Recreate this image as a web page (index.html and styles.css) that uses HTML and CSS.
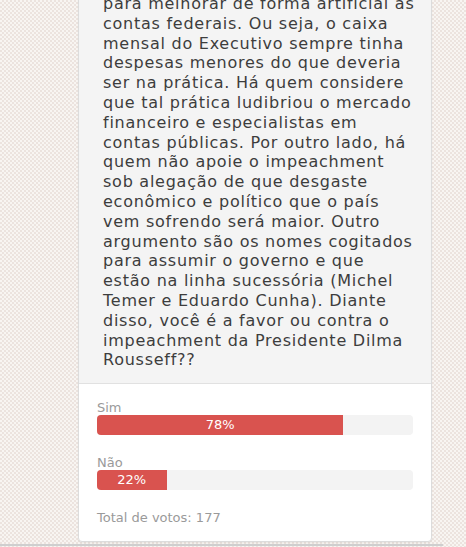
FILE: index.html
```html
<!DOCTYPE html>
<html lang="pt">
<head>
<meta charset="utf-8">
<link rel="stylesheet" href="styles.css">
</head>
<body>
<div class="page">
  <div class="poll">
    <div class="question">
      <p>para melhorar de forma artificial as contas federais. Ou seja, o caixa mensal do Executivo sempre tinha despesas menores do que deveria ser na prática. Há quem considere que tal prática ludibriou o mercado financeiro e especialistas em contas públicas. Por outro lado, há quem não apoie o impeachment sob alegação de que desgaste econômico e político que o país vem sofrendo será maior. Outro argumento são os nomes cogitados para assumir o governo e que estão na linha sucessória (Michel Temer e Eduardo Cunha). Diante disso, você é a favor ou contra o impeachment da Presidente Dilma Rousseff??</p>
    </div>
    <div class="results">
      <div class="option">
        <div class="label">Sim</div>
        <div class="bar"><div class="fill" style="width:78%">78%</div></div>
      </div>
      <div class="option">
        <div class="label">Não</div>
        <div class="bar"><div class="fill" style="width:22%">22%</div></div>
      </div>
      <div class="total">Total de votos: 177</div>
    </div>
  </div>
</div>
<div class="hline"></div>
</body>
</html>
```
FILE: styles.css
```css
html, body {
  margin: 0;
  padding: 0;
  height: 547px;
  overflow: hidden;
}
body {
  background-color: #f8f5f2;
  background-image:
    linear-gradient(45deg, rgba(215,195,185,0.35) 25%, transparent 25%, transparent 75%, rgba(215,195,185,0.35) 75%),
    linear-gradient(45deg, rgba(215,195,185,0.35) 25%, transparent 25%, transparent 75%, rgba(215,195,185,0.35) 75%);
  background-size: 4px 4px;
  background-position: 0 0, 2px 2px;
  font-family: "DejaVu Sans", Verdana, sans-serif;
}
.page {
  display: flow-root;
  padding-left: 78px;
  height: 544px;
}
.poll {
  width: 352px;
  margin-top: -27px;
  background: #fff;
  border: 1px solid #dcdcdc;
  border-radius: 4px;
  box-shadow: 0 1px 2px rgba(0,0,0,0.06);
}
.question {
  background: #f4f4f4;
  border-bottom: 1px solid #e1e1e1;
  padding: 20px 14px 13px 24px;
  border-radius: 4px 4px 0 0;
}
.question p {
  margin: 0;
  font-size: 16px;
  letter-spacing: 0.75px;
  line-height: 19.8px;
  color: #3d3d3d;
}
.results {
  padding: 16px 18px 14px 18px;
}
.option {
  margin-bottom: 20px;
}
.option + .option {
  margin-bottom: 19px;
}
.label {
  font-size: 13px;
  line-height: 15px;
  color: #9a9a9a;
}
.bar {
  height: 20px;
  background: #f3f3f3;
  border-radius: 4px;
  overflow: hidden;
}
.fill {
  height: 100%;
  background: #d9534f;
  color: #fff;
  font-size: 13px;
  line-height: 20px;
  text-align: center;
}
.total {
  font-size: 13px;
  line-height: 18px;
  color: #9a9a9a;
}
.hline {
  width: 443px;
  height: 2px;
  background: #cfcfcf;
}
```
